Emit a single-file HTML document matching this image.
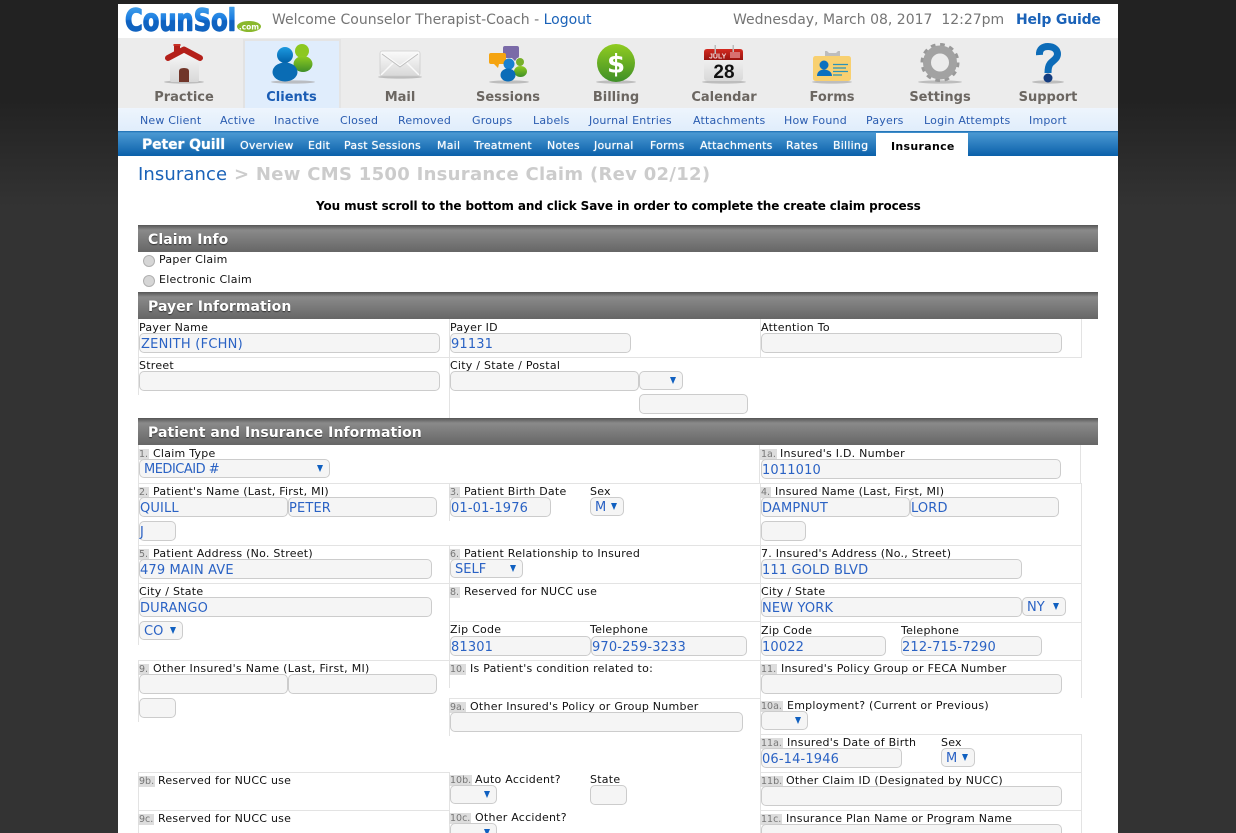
<!DOCTYPE html>
<html><head><meta charset="utf-8"><title>CounSol</title>
<style>
html,body{margin:0;padding:0;width:1236px;height:833px;overflow:hidden;background:#333;font-family:"DejaVu Sans","Liberation Sans",sans-serif}
#w{position:relative;width:1236px;height:833px;overflow:hidden;background:linear-gradient(#222 0,#222 100px,#333 207px,#333 100%)}
#p{position:absolute;left:118px;top:4px;width:1000px;height:829px;background:#fff}
.t,.a,.i,.s,.h,.l,.v,.n{position:absolute;white-space:nowrap;box-sizing:border-box}
.t{font-size:11px;line-height:14px;color:#111;margin-top:1px;letter-spacing:.25px}
.n{font-size:9.5px;line-height:11px;background:#ddd;color:#777;padding:0 1px;height:11px;margin-top:2px;letter-spacing:0}
.i,.s{height:20px;background:#f5f5f5;border:1px solid #ccc;border-radius:5px;font-size:13px;line-height:21px;color:#2a62c4;padding-left:0;letter-spacing:.15px}
.s{height:19px;line-height:20px;padding-left:4px;letter-spacing:0}
.s:after{content:"";position:absolute;right:6px;top:5px;border-left:3.5px solid transparent;border-right:3.5px solid transparent;border-top:7px solid #1060c0}
.h{left:138px;width:960px;height:27px;background:linear-gradient(#555 0,#8a8a8a 5px,#666 100%);color:#fff;font-weight:bold;font-size:14px;line-height:31px;padding-left:10px;text-shadow:0 1px 1px #333;letter-spacing:.07px}
.l{background:#e3e3e3}
.nv{position:absolute;top:90px;font-size:13px;line-height:15px;font-weight:bold;color:#6b6661;transform:translateX(-50%);white-space:nowrap}
.sb{position:absolute;top:114px;font-size:11px;line-height:14px;color:#2a5cb0;white-space:nowrap;letter-spacing:.2px}
.bb{position:absolute;top:139px;font-size:11px;line-height:14px;color:#fff;white-space:nowrap;text-shadow:0 0 1px #cfe4f5;letter-spacing:.22px}
</style></head><body><div id="w">
<div id="p"></div>
<div class="a" style="left:118px;top:38px;width:1000px;height:70px;background:#ececec"></div>
<div class="a" style="left:243px;top:39px;width:98px;height:69px;background:#e0edfc;border-left:2px solid #e2e2e2;border-top:2px solid #e4e4e4;border-right:2px solid #e4e4e4"></div>
<div class="a" style="left:118px;top:108px;width:1000px;height:23px;background:linear-gradient(#eef5fd,#e0edfb)"></div>
<div class="a" style="left:118px;top:131px;width:1000px;height:25px;background:linear-gradient(#1a6cb0 0,#4a98d2 2px,#0a60aa 100%)"></div>
<div class="a" style="left:876px;top:133px;width:92px;height:23px;background:#fff"></div>

<svg style="position:absolute;left:0;top:0" width="1236" height="833" viewBox="0 0 1236 833">
<defs>
<linearGradient id="lg" gradientUnits="userSpaceOnUse" x1="0" y1="8" x2="0" y2="31"><stop offset="0" stop-color="#3d9be8"/><stop offset=".5" stop-color="#1a7be0"/><stop offset=".55" stop-color="#0f62c0"/><stop offset="1" stop-color="#0f62c0"/></linearGradient>
<linearGradient id="bl" x1="0" y1="0" x2="0" y2="1"><stop offset="0" stop-color="#1d9ae0"/><stop offset="1" stop-color="#0060a8"/></linearGradient>
<linearGradient id="gr" x1="0" y1="0" x2="0" y2="1"><stop offset="0" stop-color="#90cc20"/><stop offset="1" stop-color="#3f8f28"/></linearGradient>
<linearGradient id="wh" x1="0" y1="0" x2="0" y2="1"><stop offset="0" stop-color="#fbfbfb"/><stop offset="1" stop-color="#d8d8d8"/></linearGradient>
<linearGradient id="rd" x1="0" y1="0" x2="0" y2="1"><stop offset="0" stop-color="#d42a20"/><stop offset="1" stop-color="#981410"/></linearGradient>
</defs>
<text x="125" y="30.500" font-family="DejaVu Sans" font-weight="bold" font-size="30" fill="url(#lg)" stroke="url(#lg)" stroke-width="1.400" stroke-linejoin="round" textLength="111" lengthAdjust="spacingAndGlyphs">CounSol</text>
<ellipse cx="249" cy="26.500" rx="12" ry="5.500" fill="#8ab82c"/>
<text x="249" y="29.500" text-anchor="middle" font-family="DejaVu Sans" font-weight="bold" font-size="7.500" fill="#fff">.com</text>
<g fill="#aaa" opacity=".7">
<ellipse cx="184" cy="82" rx="20" ry="1.600"/><ellipse cx="293" cy="82" rx="22" ry="1.600"/><ellipse cx="400" cy="77" rx="22" ry="1.600"/><ellipse cx="509" cy="82" rx="20" ry="1.600"/><ellipse cx="616" cy="82" rx="20" ry="1.600"/><ellipse cx="724" cy="82" rx="22" ry="1.600"/><ellipse cx="832" cy="82" rx="20" ry="1.600"/><ellipse cx="940" cy="82" rx="22" ry="1.600"/><ellipse cx="1048" cy="82" rx="16" ry="1.600"/>
</g>
<!-- house -->
<path d="M170 58L184 49L199 58V80Q199 82 197 82H172Q170 82 170 80Z" fill="url(#wh)"/>
<path d="M179 82V71Q179 68 184 68Q189 68 189 71V82Z" fill="#71362a"/>
<rect x="174" y="45" width="6" height="7" fill="#b4201a"/><rect x="173.500" y="44" width="7" height="2" fill="#c83026"/>
<path d="M168 58L184 49.500L200 58" fill="none" stroke="#b4201a" stroke-width="6" stroke-linecap="round" stroke-linejoin="round"/>
<!-- clients -->
<circle cx="302" cy="51" r="7" fill="#8cc820"/>
<ellipse cx="303" cy="64" rx="9.500" ry="8" fill="url(#gr)"/>
<circle cx="285" cy="55" r="8" fill="url(#bl)"/>
<ellipse cx="285" cy="72" rx="12.500" ry="9.500" fill="#0a6cb4"/>
<!-- mail -->
<rect x="380" y="51" width="40" height="25" rx="2.500" fill="url(#wh)" stroke="#ccc" stroke-width=".8"/>
<path d="M381 52L400 66L419 52M381 75L394 62M419 75L406 62" fill="none" stroke="#fafafa" stroke-width="1.500"/>
<path d="M382 54L400 67L418 54" fill="none" stroke="#bbb" stroke-width=".8"/>
<!-- sessions -->
<path d="M505 46H517Q519 46 519 48V56Q519 58 517 58L515 61L512 58H505Q503 58 503 56V48Q503 46 505 46Z" fill="#7a6aa8"/>
<circle cx="520" cy="62" r="4" fill="#78b02a"/>
<ellipse cx="520.500" cy="71.500" rx="6.500" ry="5.500" fill="url(#gr)"/>
<path d="M491 53H504Q506 53 506 55V62Q506 64 504 64H499L498 68L494 64H491Q489 64 489 62V55Q489 53 491 53Z" fill="#f5a410"/>
<circle cx="509" cy="64" r="5.500" fill="#1880d0"/>
<ellipse cx="508" cy="75" rx="7.500" ry="6.500" fill="#0a6cb8"/>
<!-- billing -->
<circle cx="616" cy="63" r="19" fill="url(#gr)"/>
<text x="616" y="72.500" text-anchor="middle" font-family="DejaVu Sans" font-weight="bold" font-size="26" fill="#fff">$</text>
<!-- calendar -->
<rect x="704" y="49" width="39" height="32" rx="3" fill="url(#wh)"/>
<path d="M704 60V52Q704 49 707 49H740Q743 49 743 52V60Z" fill="url(#rd)"/>
<rect x="714.500" y="45" width="1.500" height="9" fill="#bbb"/><rect x="732.500" y="45" width="1.500" height="9" fill="#bbb"/>
<rect x="730" y="52" width="10" height="6" fill="#d87070"/>
<text x="709" y="58.500" font-family="Liberation Sans" font-weight="bold" font-size="7" fill="#f3dcdc">JULY</text>
<text x="724" y="78" text-anchor="middle" font-family="Liberation Sans" font-weight="bold" font-size="19" fill="#111">28</text>
<!-- forms -->
<path d="M825 56V51H827L829 53H836L838 51H840V56Z" fill="#bdbdbd"/>
<rect x="813" y="56" width="38" height="25" rx="2.500" fill="#f8d070"/>
<circle cx="824" cy="65" r="4.500" fill="#0a70c0"/>
<path d="M817 76C817 72 820 69.500 824 69.500C828 69.500 832 72 832 76Z" fill="#0a70c0"/>
<path d="M833 64.500H848M833 68H846M833 71.500H848M833 75H842" stroke="#2a92b8" stroke-width="1.200"/>
<!-- gear -->
<circle cx="940" cy="62.500" r="17.500" fill="none" stroke="#999" stroke-width="4" stroke-dasharray="4.580 4.580"/>
<circle cx="940" cy="62.500" r="13" fill="none" stroke="#a2a2a2" stroke-width="8"/>
<!-- help -->
<path d="M1039.500 55C1039 49 1043 46.500 1048 46.500C1054 46.500 1057.500 50 1057.500 54C1057.500 59 1052 61 1050 64C1048.500 66 1048 68 1048 73" fill="none" stroke="#0d6cb8" stroke-width="7"/>
<circle cx="1048" cy="78" r="4.500" fill="#143d80"/>
<!-- radios -->
<circle cx="149" cy="261" r="5.500" fill="#d6d6d6" stroke="#b0b0b0"/>
<circle cx="149" cy="281" r="5.500" fill="#d6d6d6" stroke="#b0b0b0"/>
</svg>

<div class="t" style="left:272px;top:12px;font-size:14px;line-height:17px;color:#757575;margin:0;letter-spacing:0">Welcome Counselor Therapist-Coach - <span style="color:#1a62b8">Logout</span></div>
<div class="t" style="left:733px;top:12px;font-size:14px;line-height:17px;color:#757575;margin:0;letter-spacing:0">Wednesday, March 08, 2017&nbsp; 12:27pm</div>
<div class="t" style="left:1016px;top:12px;font-size:14px;line-height:17px;color:#1a62b8;font-weight:bold;margin:0;letter-spacing:-.2px">Help Guide</div>

<div class="nv" style="left:184px">Practice</div><div class="nv" style="left:291.500px;color:#1a5cb4">Clients</div><div class="nv" style="left:400px">Mail</div><div class="nv" style="left:508px">Sessions</div><div class="nv" style="left:616px">Billing</div><div class="nv" style="left:724px">Calendar</div><div class="nv" style="left:832px">Forms</div><div class="nv" style="left:940px">Settings</div><div class="nv" style="left:1048px">Support</div>

<div class="sb" style="left:140px">New Client</div><div class="sb" style="left:220px">Active</div><div class="sb" style="left:274px">Inactive</div><div class="sb" style="left:340px">Closed</div><div class="sb" style="left:398px">Removed</div><div class="sb" style="left:472px">Groups</div><div class="sb" style="left:533px">Labels</div><div class="sb" style="left:589px">Journal Entries</div><div class="sb" style="left:693px">Attachments</div><div class="sb" style="left:784px">How Found</div><div class="sb" style="left:866px">Payers</div><div class="sb" style="left:924px">Login Attempts</div><div class="sb" style="left:1029px">Import</div>

<div class="bb" style="left:142px;top:137px;font-size:14px;line-height:16px;font-weight:bold;letter-spacing:-.1px">Peter Quill</div>
<div class="bb" style="left:240px">Overview</div><div class="bb" style="left:308px">Edit</div><div class="bb" style="left:344px">Past Sessions</div><div class="bb" style="left:437px">Mail</div><div class="bb" style="left:474px">Treatment</div><div class="bb" style="left:547px">Notes</div><div class="bb" style="left:594px">Journal</div><div class="bb" style="left:650px">Forms</div><div class="bb" style="left:700px">Attachments</div><div class="bb" style="left:786px">Rates</div><div class="bb" style="left:833px">Billing</div>
<div class="t" style="left:891px;top:139px;font-weight:bold;color:#000;letter-spacing:.3px">Insurance</div>

<div class="t" style="left:138px;top:163px;font-size:18px;line-height:21px;color:#1a62b8;letter-spacing:.1px">Insurance</div>
<div class="t" style="left:234px;top:163px;font-size:18px;line-height:21px;color:#ccc;font-weight:bold;letter-spacing:.29px">&gt; New CMS 1500 Insurance Claim (Rev 02/12)</div>
<div class="t" style="left:316px;top:198px;font-size:12px;line-height:15px;color:#000;font-weight:bold;letter-spacing:-.12px">You must scroll to the bottom and click Save in order to complete the create claim process</div>

<div class="h" style="top:225px">Claim Info</div>
<div class="t" style="left:159px;top:252px">Paper Claim</div>
<div class="t" style="left:159px;top:272px">Electronic Claim</div>
<div class="h" style="top:292px">Payer Information</div>
<div class="h" style="top:418px">Patient and Insurance Information</div>

<!-- lines -->
<div class="l" style="left:138px;top:319px;width:1px;height:76px"></div>
<div class="l" style="left:449px;top:319px;width:1px;height:99px"></div>
<div class="l" style="left:760px;top:319px;width:1px;height:39px"></div>
<div class="l" style="left:1081px;top:319px;width:1px;height:39px"></div>
<div class="l" style="left:138px;top:357px;width:944px;height:1px"></div>
<div class="l" style="left:138px;top:445px;width:1px;height:200px"></div>
<div class="l" style="left:138px;top:660px;width:1px;height:62px"></div>
<div class="l" style="left:138px;top:772px;width:1px;height:61px"></div>
<div class="l" style="left:759px;top:445px;width:1px;height:38px"></div>
<div class="l" style="left:1080px;top:445px;width:1px;height:38px"></div>
<div class="l" style="left:138px;top:483px;width:944px;height:1px"></div>
<div class="l" style="left:449px;top:483px;width:1px;height:38px"></div>
<div class="l" style="left:760px;top:483px;width:1px;height:350px"></div>
<div class="l" style="left:1081px;top:483px;width:1px;height:215px"></div>
<div class="l" style="left:138px;top:545px;width:944px;height:1px"></div>
<div class="l" style="left:449px;top:545px;width:1px;height:38px"></div>
<div class="l" style="left:138px;top:583px;width:944px;height:1px"></div>
<div class="l" style="left:449px;top:583px;width:1px;height:105px"></div>
<div class="l" style="left:449px;top:621px;width:311px;height:1px"></div>
<div class="l" style="left:760px;top:622px;width:322px;height:1px"></div>
<div class="l" style="left:138px;top:660px;width:944px;height:1px"></div>
<div class="l" style="left:449px;top:698px;width:311px;height:1px"></div>
<div class="l" style="left:449px;top:698px;width:1px;height:38px"></div>
<div class="l" style="left:760px;top:734px;width:322px;height:1px"></div>
<div class="l" style="left:1081px;top:734px;width:1px;height:99px"></div>
<div class="l" style="left:138px;top:772px;width:312px;height:1px"></div>
<div class="l" style="left:449px;top:772px;width:1px;height:61px"></div>
<div class="l" style="left:760px;top:772px;width:322px;height:1px"></div>
<div class="l" style="left:138px;top:810px;width:312px;height:1px"></div>
<div class="l" style="left:760px;top:810px;width:322px;height:1px"></div>

<!-- payer -->
<div class="t" style="left:139px;top:320px">Payer Name</div><div class="i" style="left:139px;top:333px;width:301px;letter-spacing:.25px;padding-left:1px">ZENITH (FCHN)</div>
<div class="t" style="left:450px;top:320px">Payer ID</div><div class="i" style="left:450px;top:333px;width:181px">91131</div>
<div class="t" style="left:761px;top:320px">Attention To</div><div class="i" style="left:761px;top:333px;width:301px"></div>
<div class="t" style="left:139px;top:358px">Street</div><div class="i" style="left:139px;top:371px;width:301px"></div>
<div class="t" style="left:450px;top:358px">City / State / Postal</div><div class="i" style="left:450px;top:371px;width:189px"></div>
<div class="s" style="left:639px;top:371px;width:44px"></div><div class="i" style="left:639px;top:394px;width:109px"></div>

<!-- patient -->
<div class="n" style="left:138px;top:447px">1.</div><div class="t" style="left:153px;top:446px">Claim Type</div>
<div class="s" style="left:139px;top:459px;width:191px;letter-spacing:-.5px">MEDICAID #</div>
<div class="n" style="left:760px;top:447px">1a.</div><div class="t" style="left:780px;top:446px">Insured's I.D. Number</div>
<div class="i" style="left:761px;top:459px;width:300px">1011010</div>

<div class="n" style="left:138px;top:485px">2.</div><div class="t" style="left:153px;top:484px">Patient's Name (Last, First, MI)</div>
<div class="i" style="left:139px;top:497px;width:149px">QUILL</div><div class="i" style="left:288px;top:497px;width:149px">PETER</div><div class="i" style="left:139px;top:521px;width:37px">J</div>
<div class="n" style="left:449px;top:485px">3.</div><div class="t" style="left:464px;top:484px">Patient Birth Date</div><div class="i" style="left:450px;top:497px;width:101px">01-01-1976</div>
<div class="t" style="left:590px;top:484px">Sex</div><div class="s" style="left:590px;top:497px;width:34px">M</div>
<div class="n" style="left:760px;top:485px">4.</div><div class="t" style="left:775px;top:484px">Insured Name (Last, First, MI)</div>
<div class="i" style="left:761px;top:497px;width:149px">DAMPNUT</div><div class="i" style="left:910px;top:497px;width:149px">LORD</div><div class="i" style="left:761px;top:521px;width:45px"></div>

<div class="n" style="left:138px;top:547px">5.</div><div class="t" style="left:153px;top:546px">Patient Address (No. Street)</div><div class="i" style="left:139px;top:559px;width:293px">479 MAIN AVE</div>
<div class="n" style="left:449px;top:547px">6.</div><div class="t" style="left:464px;top:546px">Patient Relationship to Insured</div><div class="s" style="left:450px;top:559px;width:73px">SELF</div>
<div class="t" style="left:761px;top:546px">7. Insured's Address (No., Street)</div><div class="i" style="left:761px;top:559px;width:261px">111 GOLD BLVD</div>

<div class="t" style="left:139px;top:584px">City / State</div><div class="i" style="left:139px;top:597px;width:293px">DURANGO</div><div class="s" style="left:139px;top:621px;width:44px">CO</div>
<div class="n" style="left:449px;top:585px">8.</div><div class="t" style="left:464px;top:584px">Reserved for NUCC use</div>
<div class="t" style="left:450px;top:622px">Zip Code</div><div class="t" style="left:590px;top:622px">Telephone</div>
<div class="i" style="left:450px;top:636px;width:141px">81301</div><div class="i" style="left:591px;top:636px;width:156px">970-259-3233</div>
<div class="t" style="left:761px;top:584px">City / State</div><div class="i" style="left:761px;top:597px;width:261px">NEW YORK</div><div class="s" style="left:1022px;top:597px;width:44px">NY</div>
<div class="t" style="left:761px;top:623px">Zip Code</div><div class="t" style="left:901px;top:623px">Telephone</div>
<div class="i" style="left:761px;top:636px;width:125px">10022</div><div class="i" style="left:901px;top:636px;width:141px">212-715-7290</div>

<div class="n" style="left:138px;top:662px">9.</div><div class="t" style="left:153px;top:661px;letter-spacing:.3px">Other Insured's Name (Last, First, MI)</div>
<div class="i" style="left:139px;top:674px;width:149px"></div><div class="i" style="left:288px;top:674px;width:149px"></div><div class="i" style="left:139px;top:698px;width:37px"></div>
<div class="n" style="left:449px;top:662px">10.</div><div class="t" style="left:470px;top:661px">Is Patient's condition related to:</div>
<div class="n" style="left:449px;top:700px">9a.</div><div class="t" style="left:470px;top:699px">Other Insured's Policy or Group Number</div><div class="i" style="left:450px;top:712px;width:293px"></div>
<div class="n" style="left:760px;top:662px">11.</div><div class="t" style="left:781px;top:661px">Insured's Policy Group or FECA Number</div><div class="i" style="left:761px;top:674px;width:301px"></div>
<div class="n" style="left:760px;top:699px">10a.</div><div class="t" style="left:787px;top:698px">Employment? (Current or Previous)</div><div class="s" style="left:761px;top:711px;width:47px"></div>
<div class="n" style="left:760px;top:736px">11a.</div><div class="t" style="left:787px;top:735px">Insured's Date of Birth</div><div class="t" style="left:941px;top:735px">Sex</div>
<div class="i" style="left:761px;top:748px;width:141px">06-14-1946</div><div class="s" style="left:941px;top:748px;width:34px">M</div>

<div class="n" style="left:138px;top:774px">9b.</div><div class="t" style="left:158px;top:773px">Reserved for NUCC use</div>
<div class="n" style="left:449px;top:773px">10b.</div><div class="t" style="left:475px;top:772px">Auto Accident?</div><div class="t" style="left:590px;top:772px">State</div>
<div class="s" style="left:450px;top:785px;width:47px"></div><div class="i" style="left:590px;top:785px;width:37px"></div>
<div class="n" style="left:760px;top:774px">11b.</div><div class="t" style="left:786px;top:773px">Other Claim ID (Designated by NUCC)</div><div class="i" style="left:761px;top:786px;width:301px"></div>
<div class="n" style="left:138px;top:812px">9c.</div><div class="t" style="left:158px;top:811px">Reserved for NUCC use</div>
<div class="n" style="left:449px;top:811px">10c.</div><div class="t" style="left:475px;top:810px">Other Accident?</div><div class="s" style="left:450px;top:823px;width:47px"></div>
<div class="n" style="left:760px;top:812px">11c.</div><div class="t" style="left:786px;top:811px">Insurance Plan Name or Program Name</div><div class="i" style="left:761px;top:824px;width:301px"></div>
</div></body></html>
